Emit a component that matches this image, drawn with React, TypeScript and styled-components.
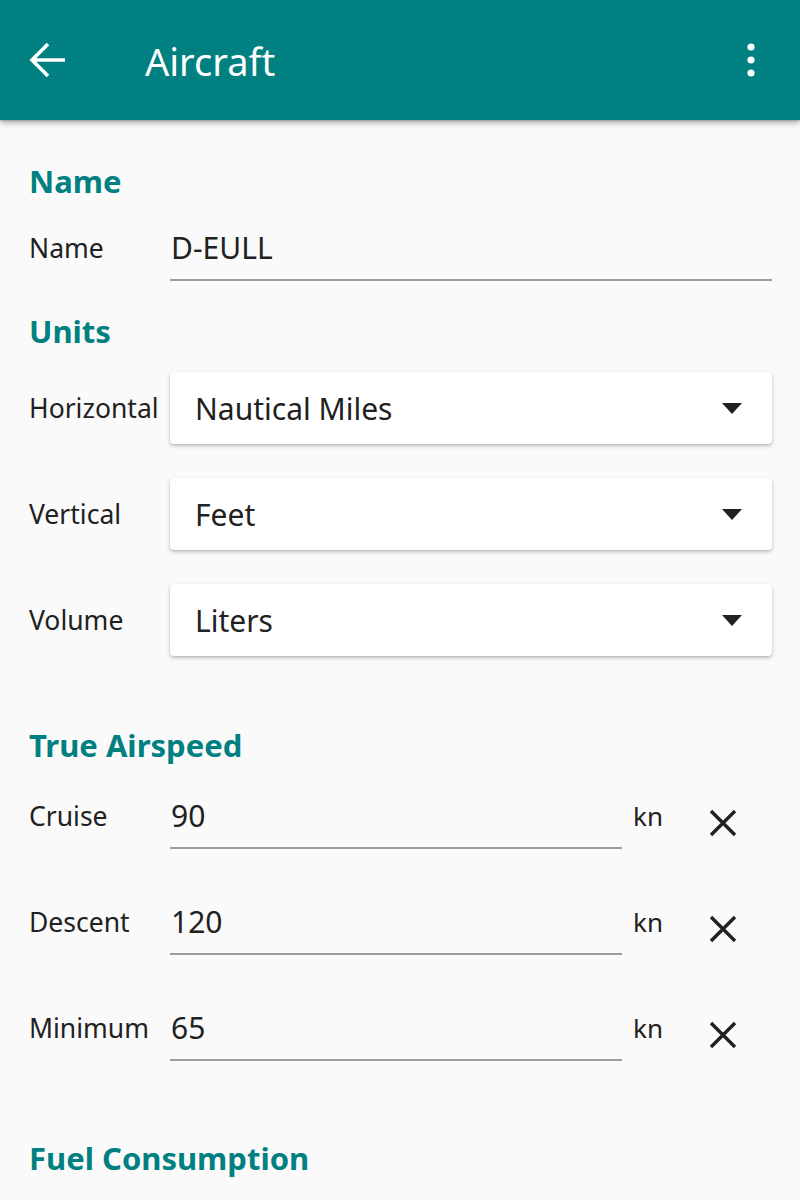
import React from 'react'
import styled, { createGlobalStyle } from 'styled-components'

const GlobalStyle = createGlobalStyle`
  html, body {
    margin: 0;
    padding: 0;
    background: #fafafa;
    font-family: "Noto Sans", "Open Sans", sans-serif;
    color: #212121;
  }
  * { box-sizing: border-box; }
`

const TEAL = '#008080'

const Screen = styled.div`
  width: 800px;
  height: 1200px;
  overflow: hidden;
  background: #fafafa;
`

const AppBar = styled.header`
  position: relative;
  z-index: 2;
  height: 120px;
  background: ${TEAL};
  display: flex;
  align-items: center;
  padding: 0 25px 0 24px;
  box-shadow: 0 3px 6px rgba(0,0,0,0.28), 0 1px 2px rgba(0,0,0,0.2);
`

const IconButton = styled.button`
  width: 48px;
  height: 48px;
  border: 0;
  background: transparent;
  padding: 0;
  display: flex;
  align-items: center;
  justify-content: center;
  cursor: pointer;
`

const Title = styled.h1`
  flex: 1;
  margin: 0 0 0 73px;
  font-size: 38px;
  font-weight: 400;
  color: #fff;
  line-height: 44px;
  padding-top: 2px;
`

const Body = styled.main`
  padding: 0 28px 0 29px;
`

const SectionTitle = styled.h2<{ $top: number }>`
  margin: ${p => p.$top}px 0 0;
  font-size: 31px;
  font-weight: 700;
  color: ${TEAL};
  line-height: 40px;
`

const Row = styled.div<{ $top: number }>`
  display: flex;
  align-items: flex-start;
  margin-top: ${p => p.$top}px;
`

const Label = styled.div<{ $center?: boolean }>`
  width: 141px;
  flex: none;
  font-size: 26.5px;
  line-height: ${p => (p.$center ? '72px' : '46px')};
  white-space: nowrap;
  color: #212121;
`

const Field = styled.div`
  flex: 1;
  height: 56px;
  border-bottom: 2px solid #9e9e9e;
  font-size: 30px;
  line-height: 46px;
  padding-left: 1px;
  color: #212121;
`

const Unit = styled.div`
  width: 66px;
  margin-left: 11px;
  flex: none;
  font-size: 26px;
  line-height: 46px;
`

const ClearButton = styled(IconButton)`
  margin-top: 6px;
  margin-right: 25px;
  flex: none;
`

const Select = styled.div`
  flex: 1;
  height: 72px;
  background: #fff;
  border-radius: 4px;
  box-shadow: 0 2px 4px rgba(0,0,0,0.2), 0 1px 2px rgba(0,0,0,0.12);
  display: flex;
  align-items: center;
  justify-content: space-between;
  padding: 0 30px 0 25px;
  font-size: 30px;
`

const Caret = styled.span`
  width: 0;
  height: 0;
  border-left: 10px solid transparent;
  border-right: 10px solid transparent;
  border-top: 11px solid #212121;
`

const BackArrow = () => (
  <svg width="40" height="40" viewBox="0 0 40 40">
    <path d="M37 20H5M20 4L4 20l16 16" fill="none" stroke="#fff" strokeWidth="3.6" />
  </svg>
)

const Kebab = () => (
  <svg width="12" height="36" viewBox="0 0 12 36">
    <circle cx="6" cy="5" r="3.6" fill="#fff" />
    <circle cx="6" cy="18" r="3.6" fill="#fff" />
    <circle cx="6" cy="31" r="3.6" fill="#fff" />
  </svg>
)

const CloseIcon = () => (
  <svg width="28" height="28" viewBox="0 0 28 28">
    <path d="M2 2l24 24M26 2L2 26" stroke="#212121" strokeWidth="3.4" />
  </svg>
)

const units = [
  { label: 'Horizontal', value: 'Nautical Miles' },
  { label: 'Vertical', value: 'Feet' },
  { label: 'Volume', value: 'Liters' },
]

const speeds = [
  { label: 'Cruise', value: '90' },
  { label: 'Descent', value: '120' },
  { label: 'Minimum', value: '65' },
]

export default function App() {
  return (
    <Screen>
      <GlobalStyle />
      <AppBar>
        <IconButton aria-label="back"><BackArrow /></IconButton>
        <Title>Aircraft</Title>
        <IconButton aria-label="more"><Kebab /></IconButton>
      </AppBar>
      <Body>
        <SectionTitle $top={41}>Name</SectionTitle>
        <Row $top={24}>
          <Label>Name</Label>
          <Field>D-EULL</Field>
        </Row>

        <SectionTitle $top={30}>Units</SectionTitle>
        {units.map((u, i) => (
          <Row key={u.label} $top={i === 0 ? 21 : 34}>
            <Label $center>{u.label}</Label>
            <Select>
              {u.value}
              <Caret />
            </Select>
          </Row>
        ))}

        <SectionTitle $top={69}>True Airspeed</SectionTitle>
        {speeds.map((s, i) => (
          <Row key={s.label} $top={i === 0 ? 28 : 50}>
            <Label>{s.label}</Label>
            <Field>{s.value}</Field>
            <Unit>kn</Unit>
            <ClearButton aria-label="clear"><CloseIcon /></ClearButton>
          </Row>
        ))}

        <SectionTitle $top={77}>Fuel Consumption</SectionTitle>
      </Body>
    </Screen>
  )
}
